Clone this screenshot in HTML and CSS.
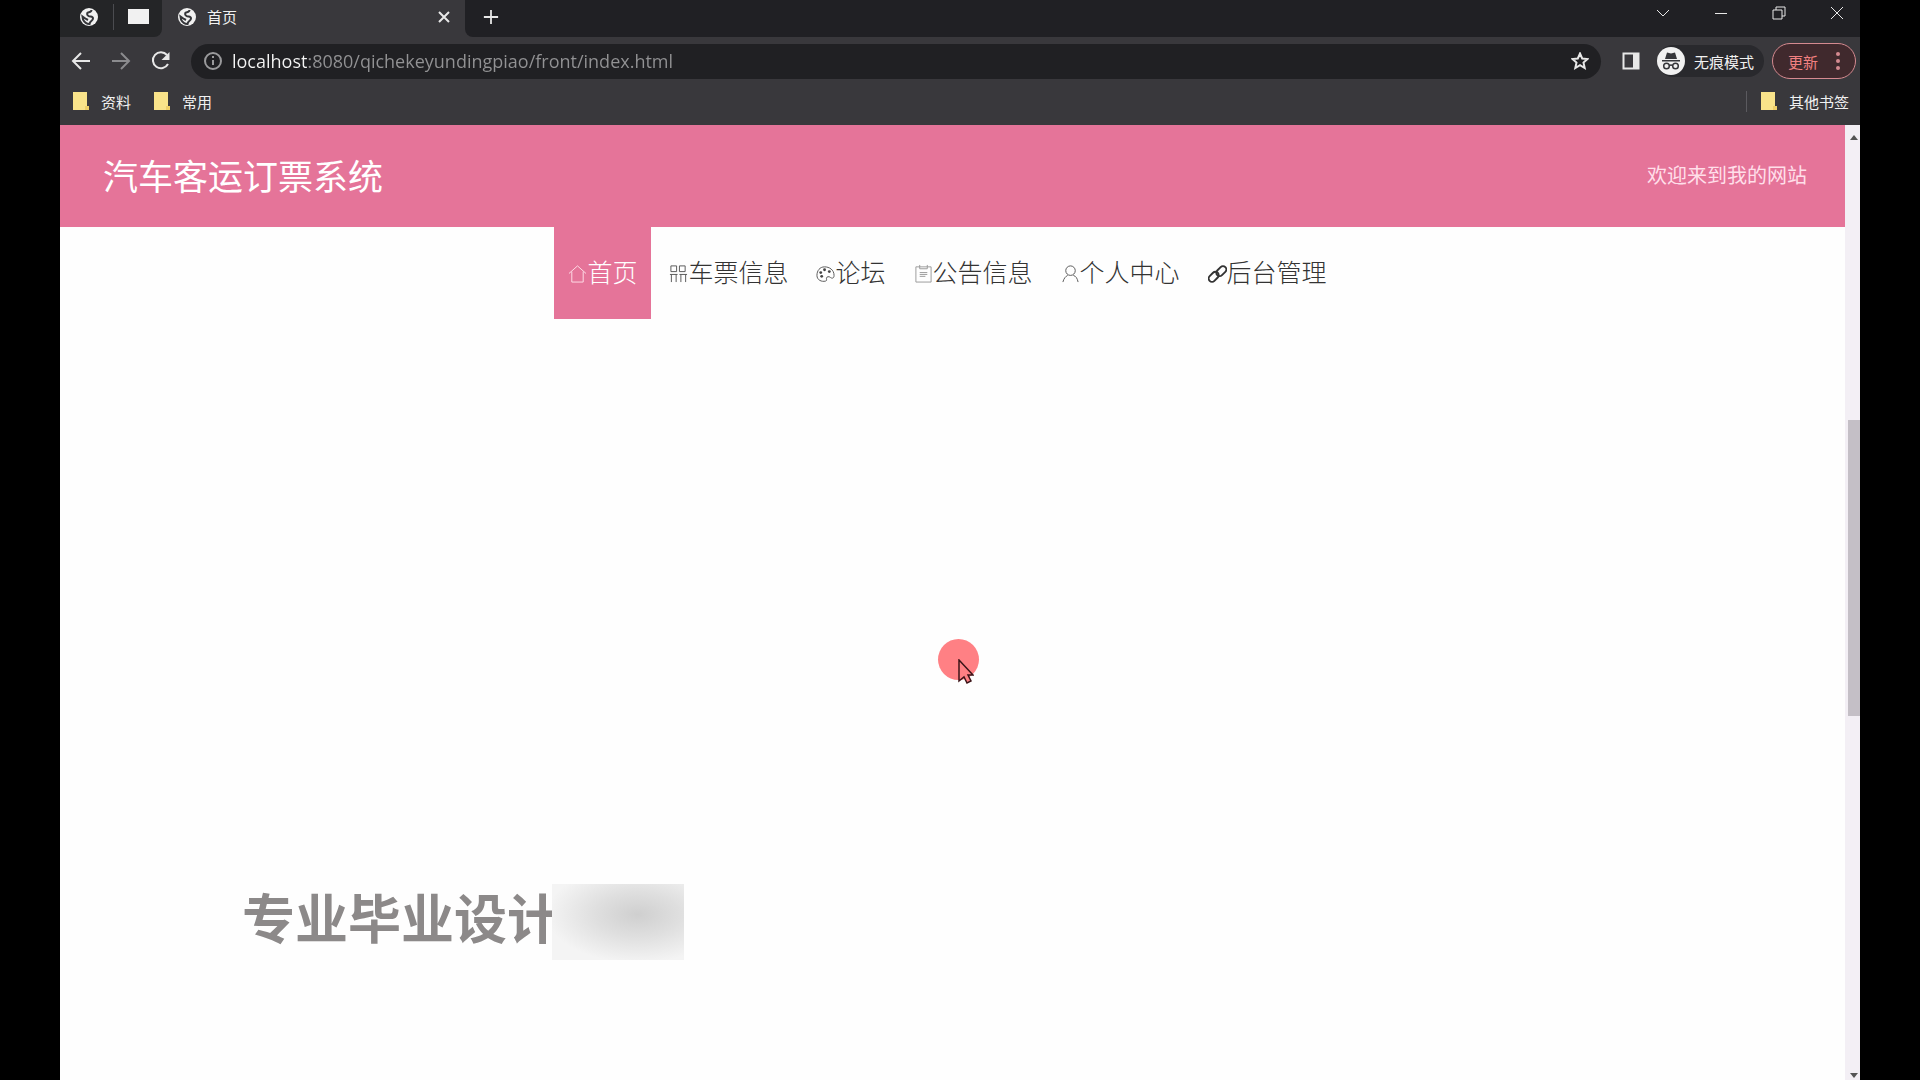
FILE: index.html
```
<!DOCTYPE html>
<html lang="zh-CN">
<head>
  <meta charset="UTF-8">
  <title>首页</title>
  <link rel="stylesheet" href="styles.css">
</head>
<body>
  <svg class="defs" width="0" height="0" aria-hidden="true">
    <symbol id="globe" viewBox="0 0 20 20">
      <circle cx="10" cy="10" r="9" fill="#f1f1f1"/>
      <path d="M12.500 3c0 2-2 2-3.500 2.500S8 8 9.500 9s4.500 0 4.500 2.500-3 2-3.500 5.500c-2 0-5-1.500-6.500-4.500l-.5-3 3.500 2.500 2 1" fill="none" stroke="#35363a" stroke-width="2"/>
    </symbol>
    <symbol id="folder" viewBox="0 0 16 18">
      <path d="M0 0h14v14h2v4H0z" fill="#f9e38a"/>
      <path d="M12 14h4v4h-4z" fill="#efcf68"/>
    </symbol>
  </svg>

  <div class="browser">
    <div class="tabs">
      <div class="pinned">
        <svg class="favicon"><use href="#globe"/></svg>
        <span class="line"></span>
        <span class="blank-page"></span>
      </div>
      <div class="tab">
        <svg class="favicon"><use href="#globe"/></svg>
        <span class="tab-title">首页</span>
        <button class="icon-btn" aria-label="关闭标签页">
          <svg width="14" height="14" viewBox="0 0 14 14"><path d="M2 2l10 10M12 2L2 12"/></svg>
        </button>
      </div>
      <button class="icon-btn new-tab" aria-label="新标签页">
        <svg width="16" height="16" viewBox="0 0 18 18"><path d="M9 1v16M1 9h16"/></svg>
      </button>
      <div class="window-buttons">
        <button class="icon-btn" aria-label="搜索标签页"><svg width="14" height="14" viewBox="0 0 14 14"><path d="M1 4l6 6 6-6"/></svg></button>
        <button class="icon-btn" aria-label="最小化"><svg width="14" height="14" viewBox="0 0 14 14"><path d="M1 7.500h12"/></svg></button>
        <button class="icon-btn" aria-label="还原"><svg width="14" height="14" viewBox="0 0 14 14"><path d="M1 4h9v9H1zM4 4V1h9v9h-3"/></svg></button>
        <button class="icon-btn" aria-label="关闭"><svg width="14" height="14" viewBox="0 0 14 14"><path d="M1 1l12 12M13 1L1 13"/></svg></button>
      </div>
    </div>

    <div class="toolbar">
      <button class="icon-btn" aria-label="后退"><svg width="20" height="20" viewBox="0 0 20 20"><path d="M19 10H2M10 2l-8 8 8 8"/></svg></button>
      <button class="icon-btn dim" aria-label="前进"><svg width="20" height="20" viewBox="0 0 20 20"><path d="M1 10h17M10 2l8 8-8 8"/></svg></button>
      <button class="icon-btn" aria-label="刷新"><svg width="20" height="20" viewBox="0 0 20 20"><path d="M17 13a8 8 0 1 1-1-9"/><path d="M18.500 1v8h-8z" class="solid"/></svg></button>
      <div class="address">
        <svg width="20" height="20" viewBox="0 0 20 20" class="info"><circle cx="10" cy="10" r="8"/><path d="M10 9v5M10 5v2"/></svg>
        <input type="text" class="url" aria-label="地址" value="localhost:8080/qichekeyundingpiao/front/index.html">
        <button class="icon-btn" aria-label="收藏"><svg width="18" height="18" viewBox="0 0 18 18" class="star"><path d="M9 1.500l2.200 5 5.300.5-4 3.600 1.200 5.400L9 13.200 4.300 16l1.200-5.400-4-3.600 5.300-.5z"/></svg></button>
      </div>
      <button class="icon-btn" aria-label="侧边栏"><svg width="20" height="20" viewBox="0 0 20 20"><path d="M2.500 2.500h15v15h-15z"/><path d="M12 2h6v16h-6z" class="solid"/></svg></button>
      <div class="incognito">
        <svg width="28" height="28" viewBox="0 0 28 28">
          <circle cx="14" cy="14" r="14" fill="#f1f1f1"/>
          <path d="M10 5.500l4 1 4-1 2 6.500H8zM5 13h18v1.500H5z" fill="#35363a"/>
          <g fill="none" stroke="#35363a" stroke-width="1.500"><circle cx="9.500" cy="19" r="2.800"/><circle cx="18.500" cy="19" r="2.800"/><path d="M12.300 18.500q1.700-1 3.400 0"/></g>
        </svg>
        <span>无痕模式</span>
      </div>
      <button class="update">
        <span>更新</span>
        <svg width="4" height="18" viewBox="0 0 4 18"><circle cx="2" cy="2" r="2"/><circle cx="2" cy="9" r="2"/><circle cx="2" cy="16" r="2"/></svg>
      </button>
    </div>

    <div class="bookmarks">
      <a href="#"><svg class="folder"><use href="#folder"/></svg>资料</a>
      <a href="#"><svg class="folder"><use href="#folder"/></svg>常用</a>
      <a href="#" class="other"><svg class="folder"><use href="#folder"/></svg>其他书签</a>
    </div>

    <div class="viewport">
      <div class="page">
        <header class="header">
          <h1>汽车客运订票系统</h1>
          <span class="welcome">欢迎来到我的网站</span>
        </header>
        <nav>
          <ul class="menu">
            <li class="active"><a href="#"><svg viewBox="0 0 20 20"><path d="M1 10l9-8 9 8M4 8v11h12V8"/></svg>首页</a></li>
            <li><a href="#"><svg viewBox="0 0 20 20"><path d="M2 2h6v6H2zM11 2h6v6h-6zM1 11h8M11 11h8M2.500 11v8M7.500 11v8M12.500 11v8M17.500 11v8"/></svg>车票信息</a></li>
            <li><a href="#"><svg viewBox="0 0 20 20"><path d="M10 18c-4 1-9-1-9-6S4 3 9 3s10 3 10 9c0 4-3 3-4 2s-4-1-4 1 1 2-1 3z"/><g class="dots"><circle cx="5" cy="9" r="1.500"/><circle cx="9" cy="6" r="1.500"/><circle cx="14" cy="8" r="1.500"/><circle cx="6" cy="13" r="1.500"/></g></svg>论坛</a></li>
            <li><a href="#"><svg viewBox="0 0 20 20" class="light"><path d="M2 3h16v16H2zM6 1v4h8V1M6 9h8M6 11h8M6 13h6"/></svg>公告信息</a></li>
            <li><a href="#"><svg viewBox="0 0 20 20"><circle cx="10" cy="7" r="5"/><path d="M2 19c1-4 3-6 5-7M13 12c3 1 4 3 5 7"/></svg>个人中心</a></li>
            <li><a href="#"><svg viewBox="0 0 20 20" class="bold"><rect x="8" y="4" width="12" height="7" rx="3.500" transform="rotate(-45 14 7.500)"/><rect x="0" y="10" width="12" height="7" rx="3.500" transform="rotate(-45 6 13.500)"/></svg>后台管理</a></li>
          </ul>
        </nav>
        <main class="content">
          <div class="watermark"><span>专业毕业设计</span><span class="smudge"></span></div>
        </main>
      </div>
      <div class="scrollbar">
        <span class="arrow up"></span>
        <span class="thumb"></span>
        <span class="arrow down"></span>
      </div>
    </div>
  </div>

  <div class="pointer">
    <svg width="16" height="26" viewBox="0 0 16 26"><path d="M1 1v21l5-4 3 6 4-2-3-6h5z" fill="#ff8084" stroke="#3c1418" stroke-width="1.500"/></svg>
  </div>
</body>
</html>
```
FILE: styles.css
```
* {
  box-sizing: border-box;
}

body {
  margin: 0;
  padding: 0 60px;
  background-color: #000;
  font-family: "Noto Sans CJK SC", sans-serif;
}

button {
  border: none;
  padding: 0;
  background: none;
  font-family: inherit;
  cursor: pointer;
}

a {
  color: inherit;
  text-decoration: none;
}

svg {
  display: block;
  flex: none;
}

.defs {
  position: absolute;
}

.browser {
  display: flex;
  flex-direction: column;
  min-height: 100vh;
  background-color: #39383c;
  color: #f1f1f1;
  font-size: 15px;
}

.icon-btn svg {
  fill: none;
  stroke: #e8e8e8;
  stroke-width: 2;
}

.icon-btn .solid {
  fill: #e8e8e8;
  stroke: none;
}

.icon-btn.dim svg {
  stroke: #8b8b8e;
}

/* tabs */
.tabs {
  display: flex;
  align-items: center;
  height: 37px;
  background-color: #39383c;
}

.pinned {
  display: flex;
  align-items: center;
  gap: 14px;
  width: 102px;
  height: 100%;
  padding: 0 0 4px 19px;
  background-color: #242527;
  border-bottom-right-radius: 8px;
}

.favicon {
  width: 20px;
  height: 20px;
}

.line {
  width: 1px;
  height: 26px;
  background-color: #4b4c50;
}

.blank-page {
  width: 21px;
  height: 15px;
  background-color: #f1f1f1;
}

.tab {
  display: flex;
  align-items: center;
  width: 303px;
  height: 100%;
  padding: 0 14px 4px 15px;
}

.tab-title {
  flex: 1;
  margin-left: 10px;
}

.new-tab {
  height: 100%;
  padding: 0 18px 4px;
  background-color: #202024;
  border-bottom-left-radius: 8px;
}

.window-buttons {
  display: flex;
  flex: 1;
  justify-content: flex-end;
  gap: 44px;
  height: 100%;
  padding: 0 16px 12px 0;
  background-color: #202024;
}

.window-buttons svg {
  stroke-width: 1;
}

/* toolbar */
.toolbar {
  display: flex;
  align-items: center;
  gap: 20px;
  height: 48px;
  padding: 0 4px 0 11px;
}

.address {
  display: flex;
  flex: 1;
  align-items: center;
  gap: 9px;
  height: 35px;
  padding: 0 12px;
  border-radius: 18px;
  background-color: #202023;
}

.info {
  fill: none;
  stroke: #9a9a9c;
  stroke-width: 2;
}

.url {
  flex: 1;
  min-width: 0;
  border: none;
  padding: 0;
  outline: none;
  /* host part is brighter than the path */
  background: linear-gradient(90deg, #f5f5f5 77px, #929294 77px);
  background-clip: text;
  color: transparent;
  font-family: "Open Sans", sans-serif;
  font-size: 18px;
}

.icon-btn .star {
  stroke-width: 2;
}

.incognito {
  display: flex;
  align-items: center;
  gap: 9px;
  height: 32px;
  margin: 0 -12px 0 -4px;
  padding-right: 10px;
  border-radius: 16px;
  background-color: #29292d;
}

.update {
  display: flex;
  align-items: center;
  gap: 18px;
  height: 36px;
  padding: 0 15px;
  border: 1px solid #d58a90;
  border-radius: 18px;
  background-color: #40292d;
  color: #f08080;
  font-size: 15px;
}

.update svg {
  fill: #d58a90;
}

/* bookmarks */
.bookmarks {
  display: flex;
  align-items: center;
  gap: 23px;
  height: 40px;
  padding: 0 11px 8px 13px;
}

.bookmarks a {
  display: flex;
  align-items: center;
  gap: 12px;
}

.folder {
  width: 16px;
  height: 18px;
}

.bookmarks .other {
  margin-left: auto;
  padding-left: 14px;
  border-left: 1px solid #5b5a5f;
}

/* page */
.viewport {
  display: flex;
  flex: 1;
  background-color: #fefefe;
  color: #333;
}

.page {
  display: flex;
  flex: 1;
  flex-direction: column;
}

.header {
  display: flex;
  align-items: center;
  justify-content: space-between;
  height: 102px;
  padding: 0 38px 4px 43px;
  background-color: #e57499;
  color: #fff;
}

h1 {
  margin: 0;
  font-size: 35px;
  font-weight: 400;
}

.welcome {
  color: #ffdfe9;
  font-size: 20px;
}

.menu {
  display: flex;
  justify-content: center;
  margin: 0;
  padding: 0 10px 0 0;
  list-style: none;
  font-size: 25px;
  font-weight: 300;
}

.menu a {
  display: flex;
  align-items: center;
  height: 92px;
  padding: 0 14px 4px;
}

.menu svg {
  width: 19px;
  height: 19px;
  margin-top: 4px;
  fill: none;
  stroke: #555;
  stroke-width: 1;
}

.menu .dots {
  fill: #444;
  stroke: none;
}

.menu .light {
  stroke: #999;
}

.menu .bold {
  stroke: #333;
  stroke-width: 2;
}

.menu .active {
  margin-right: 4px;
  background-color: #e57499;
  color: #fff;
}

.menu .active svg {
  stroke: #ffdfe9;
}

.content {
  display: flex;
  flex: 1;
  align-items: flex-end;
  padding: 0 182px 120px;
}

.watermark {
  display: flex;
  color: #8c8989;
  font-size: 53px;
  font-weight: 700;
  line-height: 64px;
}

.smudge {
  width: 132px;
  height: 76px;
  margin-left: -8px;
  background: radial-gradient(ellipse at 65% 40%, #cfcfcf, #dfdfdf 35%, #f4f4f4 75%);
}

/* scrollbar */
.scrollbar {
  display: flex;
  flex-direction: column;
  width: 15px;
  padding-left: 3px;
  background-color: #f3eff5;
}

.thumb {
  flex: 296;
  background-color: #c4bfc6;
}

.arrow {
  display: flex;
  justify-content: center;
}

.arrow::before {
  content: "";
  width: 8px;
  height: 5px;
  background-color: #555;
}

.up {
  flex: 285;
  padding-top: 10px;
}

.up::before {
  clip-path: polygon(50% 0, 100% 100%, 0 100%);
}

.down {
  flex: 362;
  align-items: flex-end;
  padding-bottom: 2px;
}

.down::before {
  clip-path: polygon(0 0, 100% 0, 50% 100%);
}

.pointer {
  position: absolute;
  top: 639px;
  left: 938px;
  width: 41px;
  height: 41px;
  padding: 20px 0 0 20px;
  border-radius: 50%;
  background-color: #ff8084;
}
```
